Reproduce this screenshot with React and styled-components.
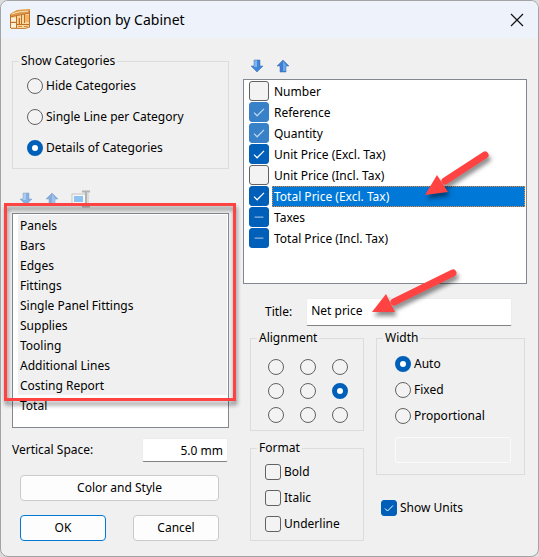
import React, { useState } from "react";
import styled, { createGlobalStyle } from "styled-components";

const categories = [
  "Panels",
  "Bars",
  "Edges",
  "Fittings",
  "Single Panel Fittings",
  "Supplies",
  "Tooling",
  "Additional Lines",
  "Costing Report",
  "Total",
];

const initialColumns = [
  { name: "Number", state: "off" },
  { name: "Reference", state: "on", locked: true },
  { name: "Quantity", state: "on", locked: true },
  { name: "Unit Price (Excl. Tax)", state: "on" },
  { name: "Unit Price (Incl. Tax)", state: "off" },
  { name: "Total Price (Excl. Tax)", state: "on" },
  { name: "Taxes", state: "mixed" },
  { name: "Total Price (Incl. Tax)", state: "mixed" },
];

const alignments = [
  "Top left",
  "Top center",
  "Top right",
  "Middle left",
  "Middle center",
  "Middle right",
  "Bottom left",
  "Bottom center",
  "Bottom right",
];

function CabinetIcon() {
  return (
    <svg width="20" height="21" viewBox="0 0 20 21" aria-hidden="true">
      <path d="M0 5L7 1L20 0V18L15 20H1L0 19Z" fill="#f8d79c" />
      <path d="M0 5L7 1L20 0V4L13 5L0 8Z" fill="#dd9a4c" />
      <path d="M2 5L8 3L18 2" stroke="#fbe3b4" fill="none" />
      <path d="M1 9H6V12H1Z M1 14H6V18H1Z" fill="#fdf0d6" />
      <path d="M8 9H10V15H8Z M15 6H19V13H15Z" fill="#f0b567" />
      <path
        d="M0.5 6V19M0 8L7 6.500L20 4M6.500 7V16M11.500 6V16M14.500 5V14M19.500 2V18M0 13.500H6M6 15.500H20M9.500 9V15M6.500 16V20"
        stroke="#c0702a"
        fill="none"
      />
      <path d="M8 17.500H12M14 17.500H18" stroke="#d98d3f" fill="none" />
      <path d="M1 19.500H15L20 18" stroke="#c98545" fill="none" />
    </svg>
  );
}

function ArrowIcon({ up }) {
  return up ? (
    <svg width="14" height="14" viewBox="0 0 14 14" aria-hidden="true">
      <path d="M7 1L13 7H10V13H4V7H1Z" fill="#3f7fd2" />
      <path d="M7 2L10 6V12H7Z" fill="#69a7ec" />
      <path d="M7 1L13 7H10V13H4V7H1Z" fill="none" stroke="#3f68a8" strokeOpacity="0.5" />
    </svg>
  ) : (
    <svg width="14" height="14" viewBox="0 0 14 14" aria-hidden="true">
      <path d="M4 1H10V7H13L7 13L1 7H4Z" fill="#3f86da" />
      <path d="M4 1H7V8H4Z" fill="#80b5ef" />
      <path d="M4 1H10V7H13L7 13L1 7H4Z" fill="none" stroke="#3f68a8" strokeOpacity="0.5" />
    </svg>
  );
}

function RenameIcon() {
  return (
    <svg width="20" height="18" viewBox="0 0 20 18" aria-hidden="true">
      <rect x="1" y="4" width="16" height="11" fill="#fafafa" stroke="#a8a8a8" />
      <rect x="3" y="6" width="9" height="6" fill="#4ea6f2" />
      <path d="M11 1.5H19M15 1V17M11 16.5H19" stroke="#8c8c8c" strokeWidth="2" fill="none" />
    </svg>
  );
}

function Check({ label, state = "off", size = 16, locked, onChange }) {
  return (
    <CheckSlot $size={size}>
      <CheckInput
        type="checkbox"
        aria-label={label}
        checked={state !== "off"}
        onChange={onChange}
        $filled={state !== "off"}
        $locked={locked}
      />
      {state === "on" && (
        <svg width={size} height={size} viewBox="0 0 16 16" aria-hidden="true">
          <path d="M4 8.5L6.5 11L12 5.5" fill="none" stroke={locked ? "#bcd6ee" : "#fff"} />
        </svg>
      )}
      {state === "mixed" && (
        <svg width={size} height={size} viewBox="0 0 16 16" aria-hidden="true">
          <path d="M4.5 8H11.5" stroke="#8fb8e2" />
        </svg>
      )}
    </CheckSlot>
  );
}

function RadioList({ name, options, value, onChange, gap }) {
  return (
    <Options $gap={gap}>
      {options.map((option) => (
        <Option key={option}>
          <Radio
            type="radio"
            name={name}
            checked={value === option}
            onChange={() => onChange(option)}
          />
          {option}
        </Option>
      ))}
    </Options>
  );
}

function Pointer({ className, width, height, line, head }) {
  return (
    <svg className={className} width={width} height={height} aria-hidden="true">
      <path d={line} stroke="#ff4343" strokeWidth="7" strokeLinecap="round" />
      <path d={head} fill="#ff4343" />
    </svg>
  );
}

export default function App() {
  const [show, setShow] = useState("Details of Categories");
  const [columns, setColumns] = useState(initialColumns);
  const [selected, setSelected] = useState(5);
  const [align, setAlign] = useState("Middle right");
  const [format, setFormat] = useState([]);
  const [width, setWidth] = useState("Auto");
  const [units, setUnits] = useState(true);

  function toggleColumn(index) {
    setColumns(
      columns.map((column, i) =>
        i === index && !column.locked
          ? { ...column, state: column.state === "on" ? "off" : "on" }
          : column
      )
    );
  }

  function toggleFormat(name) {
    setFormat(format.includes(name) ? format.filter((f) => f !== name) : [...format, name]);
  }

  return (
    <>
      <GlobalStyle />
      <Dialog role="dialog" aria-labelledby="dialog-title">
        <TitleBar>
          <CabinetIcon />
          <h1 id="dialog-title">Description by Cabinet</h1>
          <CloseButton type="button" aria-label="Close">
            <svg width="14" height="14" viewBox="0 0 14 14" aria-hidden="true">
              <path d="M1 1L13 13M13 1L1 13" stroke="#111" strokeWidth="1.2" />
            </svg>
          </CloseButton>
        </TitleBar>
        <Body>
          <Column>
            <Group>
              <legend>Show Categories</legend>
              <ShowOptions>
                <RadioList
                  name="show"
                  options={["Hide Categories", "Single Line per Category", "Details of Categories"]}
                  value={show}
                  onChange={setShow}
                  gap={15}
                />
              </ShowOptions>
            </Group>
            <Toolbar $faded>
              <ToolButton type="button" aria-label="Move category down">
                <ArrowIcon />
              </ToolButton>
              <ToolButton type="button" aria-label="Move category up">
                <ArrowIcon up />
              </ToolButton>
              <ToolButton type="button" aria-label="Rename category">
                <RenameIcon />
              </ToolButton>
            </Toolbar>
            <CategoryArea>
              <CategoryList>
                {categories.map((category) => (
                  <Category key={category} $shaded={category !== "Total"}>
                    {category}
                  </Category>
                ))}
              </CategoryList>
              <Highlight />
            </CategoryArea>
            <SpaceRow>
              <label htmlFor="space">Vertical Space:</label>
              <SpaceInput id="space" defaultValue="5.0 mm" />
            </SpaceRow>
            <Buttons>
              <Button type="button" $wide>
                Color and Style
              </Button>
              <Button type="button" $primary>
                OK
              </Button>
              <Button type="button">Cancel</Button>
            </Buttons>
          </Column>
          <Column>
            <Toolbar>
              <ToolButton type="button" aria-label="Move column down">
                <ArrowIcon />
              </ToolButton>
              <ToolButton type="button" aria-label="Move column up">
                <ArrowIcon up />
              </ToolButton>
            </Toolbar>
            <ColumnArea>
              <ColumnList>
                {columns.map((column, index) => (
                  <ColumnRow key={column.name}>
                    <Check
                      label={column.name}
                      state={column.state}
                      locked={column.locked}
                      size={20}
                      onChange={() => toggleColumn(index)}
                    />
                    <ColumnName $selected={index === selected} onClick={() => setSelected(index)}>
                      {column.name}
                    </ColumnName>
                  </ColumnRow>
                ))}
              </ColumnList>
              <ColumnPointer
                width="70"
                height="54"
                line="M62 8L22 34"
                head="M2 48L14 28L25 45Z"
              />
            </ColumnArea>
            <TitleRow>
              <label htmlFor="title">Title:</label>
              <TitleInput id="title" defaultValue="Net price" />
              <TitlePointer
                width="92"
                height="54"
                line="M83 8L24 37"
                head="M2 47L16 29L25 47Z"
              />
            </TitleRow>
            <Settings>
              <Stack>
                <Group>
                  <legend>Alignment</legend>
                  <AlignGrid>
                    {alignments.map((name) => (
                      <Radio
                        key={name}
                        type="radio"
                        name="alignment"
                        aria-label={name}
                        checked={align === name}
                        onChange={() => setAlign(name)}
                      />
                    ))}
                  </AlignGrid>
                </Group>
                <Group>
                  <legend>Format</legend>
                  <FormatOptions>
                    {["Bold", "Italic", "Underline"].map((name) => (
                      <Option key={name}>
                        <Check
                          label={name}
                          state={format.includes(name) ? "on" : "off"}
                          onChange={() => toggleFormat(name)}
                        />
                        {name}
                      </Option>
                    ))}
                  </FormatOptions>
                </Group>
              </Stack>
              <Stack>
                <Group>
                  <legend>Width</legend>
                  <WidthOptions>
                    <RadioList
                      name="width"
                      options={["Auto", "Fixed", "Proportional"]}
                      value={width}
                      onChange={setWidth}
                      gap={10}
                    />
                    <WidthInput aria-label="Width value" disabled />
                  </WidthOptions>
                </Group>
                <UnitsOption>
                  <Check
                    label="Show Units"
                    state={units ? "on" : "off"}
                    onChange={() => setUnits(!units)}
                  />
                  Show Units
                </UnitsOption>
              </Stack>
            </Settings>
          </Column>
        </Body>
      </Dialog>
    </>
  );
}

const GlobalStyle = createGlobalStyle`
  * {
    box-sizing: border-box;
  }
  body {
    margin: 0;
    background-color: #dcdcdc;
    color: #000;
    font-family: "Noto Sans", "Open Sans", sans-serif;
    font-size: 12px;
    line-height: 16px;
  }
  button, input {
    margin: 0;
    font: inherit;
    color: inherit;
  }
`;

const Dialog = styled.main`
  min-height: 100vh;
  border: 1px solid #a3a3a3;
  border-radius: 8px;
  background-color: #f0f0f0;
  overflow: hidden;
`;

const TitleBar = styled.header`
  display: flex;
  align-items: center;
  gap: 6px;
  height: 37px;
  padding: 0 14px 0 9px;
  background-color: #eef3fb;
  h1 {
    flex: 1;
    margin: 0;
    font-size: 14px;
    font-weight: 400;
    line-height: 20px;
  }
`;

const CloseButton = styled.button`
  display: flex;
  padding: 0;
  border: 0;
  background: none;
`;

const Body = styled.div`
  display: grid;
  grid-template-columns: 217fr 284fr;
  gap: 14px;
  padding: 15px 11px;
`;

const Column = styled.div`
  min-width: 0;
`;

const Group = styled.fieldset`
  min-width: 0;
  margin: 0;
  padding: 0;
  border: 1px solid #dcdcdc;
  legend {
    margin-left: 6px;
    padding: 0 2px;
  }
`;

const Options = styled.div`
  display: flex;
  flex-direction: column;
  gap: ${(props) => props.$gap}px;
`;

const Option = styled.label`
  display: flex;
  align-items: center;
  gap: 3px;
`;

const ShowOptions = styled.div`
  padding: 9px 14px 12px;
`;

const Radio = styled.input`
  appearance: none;
  flex: none;
  width: 16px;
  height: 16px;
  border: 1px solid #626262;
  border-radius: 50%;
  background-color: #f3f3f3;
  &:checked {
    border: 5px solid #005fb8;
    background-color: #fff;
  }
`;

const CheckSlot = styled.span`
  display: grid;
  flex: none;
  width: ${(props) => props.$size}px;
  height: ${(props) => props.$size}px;
  > * {
    grid-area: 1 / 1;
  }
  svg {
    pointer-events: none;
  }
`;

const CheckInput = styled.input`
  appearance: none;
  border: 1px solid ${(props) => (props.$filled ? (props.$locked ? "#3880c8" : "#005fb8") : "#626262")};
  border-radius: 3px;
  background-color: ${(props) => (props.$filled ? (props.$locked ? "#3880c8" : "#005fb8") : "#f3f3f3")};
`;

const Toolbar = styled.div`
  display: flex;
  align-items: center;
  gap: 12px;
  height: 26px;
  padding-left: 7px;
  opacity: ${(props) => (props.$faded ? 0.6 : 1)};
  margin: ${(props) => (props.$faded ? "17px 0 1px" : "0")};
`;

const ToolButton = styled.button`
  display: flex;
  padding: 0;
  border: 0;
  background: none;
`;

const CategoryArea = styled.div`
  position: relative;
`;

const CategoryList = styled.ul`
  min-height: 215px;
  margin: 0;
  padding: 1px 1px 1px 5px;
  border: 1px solid #828790;
  background-color: #fff;
  list-style: none;
`;

const Category = styled.li`
  padding: 3px 2px 1px;
  background-color: ${(props) => (props.$shaded ? "#f0f0f0" : "transparent")};
`;

const Highlight = styled.div`
  position: absolute;
  top: -10px;
  left: -8px;
  right: -7px;
  height: 198px;
  border: 3px solid #ff4343;
  filter: drop-shadow(1px 4px 2px rgba(0, 0, 0, 0.45));
  pointer-events: none;
`;

const SpaceRow = styled.div`
  display: flex;
  align-items: center;
  justify-content: space-between;
  padding: 10px 1px 13px 0;
`;

const TextInput = styled.input`
  min-width: 0;
  border: 1px solid #ececec;
  border-bottom-color: #828282;
  border-radius: 2px;
  background-color: #fff;
`;

const SpaceInput = styled(TextInput)`
  width: 86px;
  height: 24px;
  padding: 0 4px;
  text-align: right;
`;

const Buttons = styled.div`
  display: grid;
  grid-template-columns: 1fr 1fr;
  gap: 14px 27px;
  padding: 0 10px 0 8px;
`;

const Button = styled.button`
  grid-column: ${(props) => (props.$wide ? "1 / -1" : "auto")};
  height: 26px;
  padding: 0;
  border: 1px solid ${(props) => (props.$primary ? "#0078d4" : "#cacaca")};
  border-radius: 4px;
  background-color: #fdfdfd;
`;

const ColumnArea = styled.div`
  position: relative;
`;

const ColumnList = styled.div`
  min-height: 205px;
  padding: 1px 1px 1px 5px;
  border: 1px solid #828790;
  background-color: #fff;
`;

const ColumnRow = styled.div`
  display: flex;
  height: 21px;
  gap: 3px;
`;

const ColumnName = styled.span`
  flex: 1;
  padding: 2px 1px;
  border: 1px dotted ${(props) => (props.$selected ? "#ff8728" : "transparent")};
  background-color: ${(props) => (props.$selected ? "#0078d7" : "transparent")};
  color: ${(props) => (props.$selected ? "#fff" : "#000")};
`;

const StyledPointer = styled(Pointer)`
  position: absolute;
  filter: drop-shadow(2px 4px 2px rgba(0, 0, 0, 0.45));
  pointer-events: none;
`;

const ColumnPointer = styled(StyledPointer)`
  top: 68px;
  right: 34px;
`;

const TitleRow = styled.div`
  position: relative;
  display: flex;
  align-items: center;
  gap: 14px;
  padding: 14px 15px 4px 22px;
`;

const TitleInput = styled(TextInput)`
  flex: 1;
  height: 28px;
  padding: 0 4px 4px;
`;

const TitlePointer = styled(StyledPointer)`
  top: -19px;
  right: 65px;
`;

const Settings = styled.div`
  display: grid;
  grid-template-columns: 114fr 149fr;
  gap: 12px;
  padding: 0 2px 0 7px;
`;

const Stack = styled.div`
  display: flex;
  flex-direction: column;
  gap: 9px;
  min-width: 0;
`;

const AlignGrid = styled.div`
  display: grid;
  grid-template-columns: repeat(3, 16px);
  gap: 8px 16px;
  padding: 13px 14px 7px 17px;
`;

const FormatOptions = styled.div`
  display: flex;
  flex-direction: column;
  gap: 10px;
  padding: 8px 14px;
`;

const WidthOptions = styled.div`
  padding: 10px 13px 11px 18px;
`;

const WidthInput = styled.input`
  width: 100%;
  height: 26px;
  margin-top: 13px;
  border: 1px solid #fafafa;
  border-radius: 2px;
  background-color: #f0f0f0;
`;

const UnitsOption = styled(Option)`
  margin-top: 16px;
  padding-left: 5px;
`;
